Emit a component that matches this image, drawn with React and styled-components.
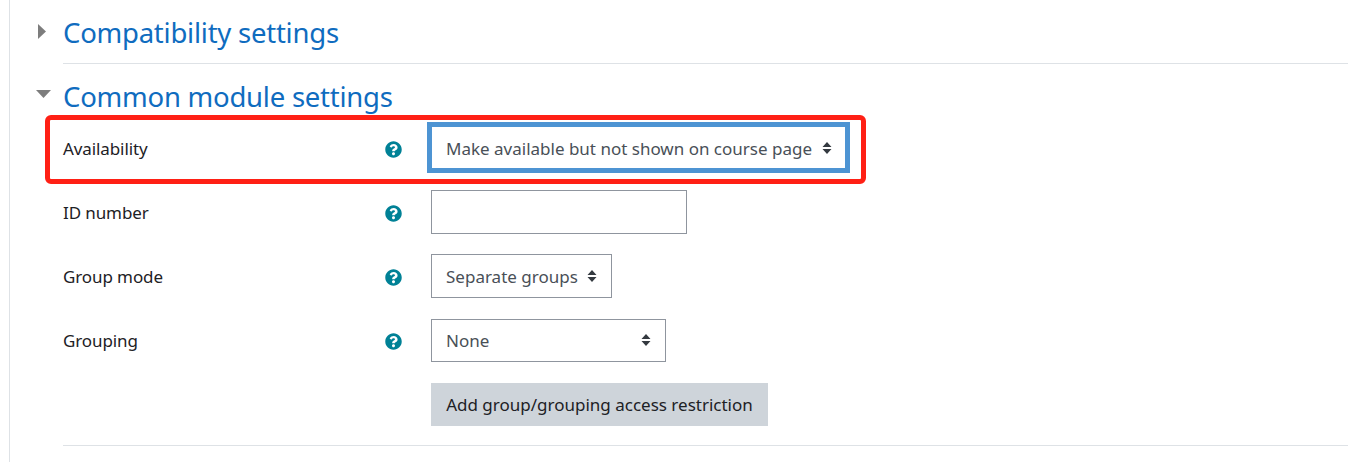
import React from "react";
import styled, { createGlobalStyle } from "styled-components";

const Global = createGlobalStyle`
    html, body { margin: 0; padding: 0; background: #fff; }
    body { font-family: "Noto Sans", "Open Sans", sans-serif; overflow: hidden; }
`;

const Page = styled.div`
    position: relative;
    width: 1348px;
    height: 462px;
    box-sizing: border-box;
    margin-left: 9px;
    border-left: 1px solid #dee2e6;
    padding: 12px 0 0 53px;
    overflow: hidden;
`;

const Section = styled.section`
    margin-bottom: ${(p) => p.$gap || 0}px;
    padding-bottom: ${(p) => p.$pad || 0}px;
    border-bottom: 1px solid #dee2e6;
`;

const Head = styled.div`
    position: relative;
    height: 42px;
    display: flex;
    align-items: center;
`;

const Title = styled.h3`
    margin: 0;
    font-size: 27.5px;
    font-weight: 400;
    color: #0f6cbf;
    line-height: 42px;
    letter-spacing: -0.24px;
`;

const Toggle = styled.svg`
    position: absolute;
    left: ${(p) => p.$left}px;
    top: ${(p) => p.$top}px;
    fill: #7d7d7d;
`;

const Rows = styled.div`
    display: flex;
    flex-direction: column;
    margin-top: -2px;
`;

const Row = styled.div`
    height: 64px;
    display: flex;
    align-items: center;
`;

const Label = styled.div`
    width: 322px;
    font-size: 17px;
    color: #1d2125;
    letter-spacing: -0.1px;
`;

const Help = styled.svg`
    width: 17px;
    height: 17px;
    margin: 2px 29px 0 0;
    flex: none;
`;

const Select = styled.div`
    box-sizing: border-box;
    height: ${(p) => p.$height}px;
    width: ${(p) => p.$width}px;
    margin: ${(p) => (p.$focus ? "-1px 0 0 -4px" : "0")};
    padding: ${(p) => (p.$focus ? "1px 13px 0 14px" : "0 14px")};
    border: ${(p) => (p.$focus ? "5px solid #4d94d3" : "1px solid #8f959e")};
    display: flex;
    align-items: center;
    justify-content: space-between;
    font-size: 17px;
    color: #495057;
    white-space: nowrap;
`;

const Input = styled.div`
    box-sizing: border-box;
    width: 256px;
    height: 44px;
    border: 1px solid #8f959e;
`;

const Caret = styled.svg`
    width: 10px;
    height: 14px;
    fill: #343a40;
    flex: none;
`;

const ButtonRow = styled.div`
    padding: 11px 0 19px 368px;
`;

const Button = styled.div`
    width: 337px;
    height: 43px;
    box-sizing: border-box;
    display: flex;
    align-items: center;
    justify-content: center;
    background: #ced4da;
    color: #1d2125;
    font-size: 17px;
    white-space: nowrap;
`;

const Highlight = styled.div`
    position: absolute;
    left: 35px;
    top: 115px;
    width: 821px;
    height: 69px;
    box-sizing: border-box;
    border: 5px solid #ff2015;
    border-radius: 6px;
    pointer-events: none;
`;

const HelpIcon = () => (
    <Help viewBox="0 0 512 512">
        <path
            fill="#008196"
            d="M504 256c0 137-111 248-248 248S8 393 8 256C8 119 119 8 256 8s248 111 248 248zM262.700 90c-54.500 0-89.300 23-116.500 63.800-3.500 5.300-2.400 12.400 2.700 16.300l34.700 26.300c5.200 3.900 12.600 3 16.700-2.100 17.900-22.700 30.100-35.800 57.300-35.800 20.400 0 45.700 13.100 45.700 32.900 0 15-12.400 22.700-32.500 34-23.500 13.200-54.600 29.600-54.600 70.600V300c0 6.600 5.400 12 12 12h56c6.600 0 12-5.400 12-12v-1.300c0-28.400 83-29.600 83-106.700 0-58-60.200-102-116.500-102zM256 338c-25.400 0-46 20.600-46 46 0 25.400 20.600 46 46 46s46-20.600 46-46c0-25.400-20.600-46-46-46z"
        />
    </Help>
);

const SelectCaret = () => (
    <Caret viewBox="0 0 10 14">
        <path d="M5 1 L9.500 6 H0.500 Z M0.500 8 H9.500 L5 13 Z" />
    </Caret>
);

export default function App() {
    return (
        <>
            <Global />
            <Page>
                <Section $pad={9} $gap={12}>
                    <Head>
                        <Toggle $left={-25} $top={12} width="8" height="15" viewBox="0 0 8 15">
                            <path d="M0 0 L8 7.500 L0 15 Z" />
                        </Toggle>
                        <Title>Compatibility settings</Title>
                    </Head>
                </Section>
                <Section>
                    <Head>
                        <Toggle $left={-27} $top={14} width="15" height="8" viewBox="0 0 15 8">
                            <path d="M0 0 H15 L7.500 8 Z" />
                        </Toggle>
                        <Title>Common module settings</Title>
                    </Head>
                    <Rows>
                        <Row>
                            <Label>Availability</Label>
                            <HelpIcon />
                            <Select $focus $width={423} $height={51}>
                                Make available but not shown on course page
                                <SelectCaret />
                            </Select>
                        </Row>
                        <Row>
                            <Label>ID number</Label>
                            <HelpIcon />
                            <Input />
                        </Row>
                        <Row>
                            <Label>Group mode</Label>
                            <HelpIcon />
                            <Select $width={181} $height={44}>
                                Separate groups
                                <SelectCaret />
                            </Select>
                        </Row>
                        <Row>
                            <Label>Grouping</Label>
                            <HelpIcon />
                            <Select $width={235} $height={43}>
                                None
                                <SelectCaret />
                            </Select>
                        </Row>
                    </Rows>
                    <ButtonRow>
                        <Button>Add group/grouping access restriction</Button>
                    </ButtonRow>
                </Section>
                <Highlight />
            </Page>
        </>
    );
}
